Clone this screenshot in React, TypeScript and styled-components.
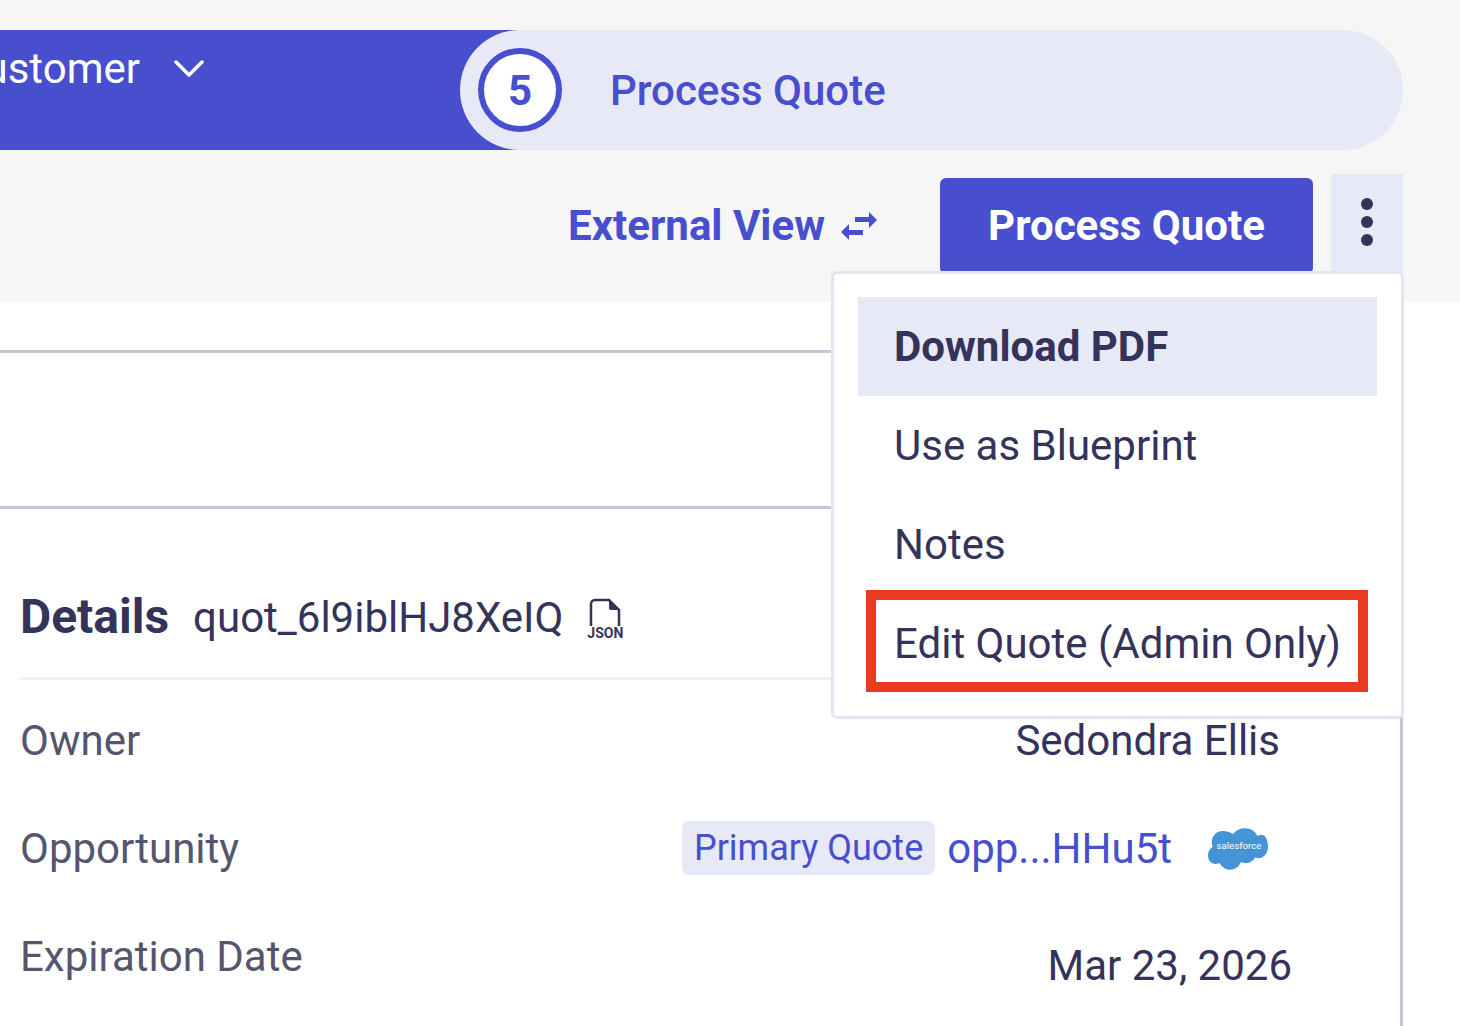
import React from "react";
import styled, { createGlobalStyle } from "styled-components";

const GlobalStyle = createGlobalStyle`
  html, body {
    margin: 0;
    padding: 0;
    background: #ffffff;
    overflow: hidden;
  }
  body {
    font-family: Roboto, "Liberation Sans", sans-serif;
    color: #34335a;
  }
`;

const Page = styled.div`
  position: relative;
  width: 1460px;
  height: 1026px;
  overflow: hidden;
`;

const Header = styled.header`
  height: 302px;
  box-sizing: border-box;
  padding: 30px 57px 0 0;
  background: #f6f6f6;
`;

const Stepper = styled.div`
  display: flex;
  height: 120px;
`;

const ActiveStep = styled.div`
  display: flex;
  justify-content: flex-end;
  flex: 0 0 520px;
  margin-right: -60px;
  padding: 13px 380px 0 0;
  box-sizing: border-box;
  background: #484fce;
  color: #ffffff;
  font-size: 42px;
  line-height: 52px;
  white-space: nowrap;
  overflow: hidden;
`;

const Chevron = styled.svg`
  flex: none;
  width: 30px;
  height: 20px;
  margin: 16px -64px 0 34px;
`;

const CurrentStep = styled.div`
  display: flex;
  align-items: center;
  flex: 1;
  padding-left: 18px;
  border-radius: 60px;
  background: #e7e9f6;
  color: #484fce;
  font-size: 42px;
  font-weight: 500;
`;

const StepNumber = styled.div`
  display: flex;
  align-items: center;
  justify-content: center;
  width: 84px;
  height: 84px;
  margin-right: 48px;
  box-sizing: border-box;
  border: 6px solid #484fce;
  border-radius: 50%;
  background: #ffffff;
  font-size: 42px;
  font-weight: 700;
`;

const Actions = styled.div`
  display: flex;
  align-items: flex-start;
  justify-content: flex-end;
  margin-top: 24px;
`;

const ExternalLink = styled.a`
  display: flex;
  align-items: center;
  height: 103px;
  margin-right: 62px;
  color: #484fce;
  font-size: 42px;
  font-weight: 700;
`;

const SwapIcon = styled.svg`
  width: 38px;
  height: 32px;
  margin-left: 15px;
`;

const PrimaryButton = styled.button`
  width: 373px;
  height: 96px;
  margin: 4px 18px 0 0;
  padding: 0 0 2px;
  border: 0;
  border-radius: 6px;
  background: #484fce;
  color: #ffffff;
  font-family: inherit;
  font-size: 42px;
  font-weight: 700;
`;

const MoreButton = styled.button`
  display: flex;
  flex-direction: column;
  align-items: center;
  gap: 6px;
  width: 72px;
  height: 98px;
  padding: 24px 0 0;
  box-sizing: border-box;
  border: 0;
  background: #e7e9f6;
`;

const Dot = styled.span`
  width: 12px;
  height: 12px;
  border-radius: 50%;
  background: #34335a;
`;

const Dropdown = styled.div`
  position: absolute;
  top: 271px;
  left: 831px;
  z-index: 2;
  width: 573px;
  height: 448px;
  box-sizing: border-box;
  padding: 23px 24px;
  border: 3px solid #e3e5f1;
  border-radius: 6px;
  background: #ffffff;
`;

const MenuItem = styled.div<{ $active?: boolean }>`
  position: relative;
  display: flex;
  align-items: center;
  height: 99px;
  padding-left: 36px;
  background: ${(p) => (p.$active ? "#e7e9f6" : "transparent")};
  color: #34335a;
  font-size: 42px;
  font-weight: ${(p) => (p.$active ? 700 : 400)};
`;

const Highlight = styled.span`
  position: absolute;
  top: -4px;
  left: 8px;
  width: 502px;
  height: 102px;
  box-sizing: border-box;
  border: 10px solid #e93b1e;
`;

const Panel = styled.section`
  height: 724px;
  margin: 48px 57px 0 0;
  box-sizing: border-box;
  border-top: 3px solid #c6c4d9;
  border-right: 3px solid #c6c4d9;
`;

const EmptyRow = styled.div`
  height: 153px;
  border-bottom: 3px solid #c6c4d9;
`;

const Details = styled.div`
  padding: 0 0 0 20px;
`;

const DetailsHeader = styled.div`
  display: flex;
  align-items: center;
  height: 171px;
  padding-top: 47px;
  box-sizing: border-box;
  border-bottom: 3px solid #f1f1f5;
`;

const DetailsTitle = styled.h2`
  margin: 0 24px 0 0;
  color: #34335a;
  font-size: 48px;
  font-weight: 700;
`;

const QuoteId = styled.span`
  margin-top: 2px;
  color: #34335a;
  font-size: 42px;
`;

const JsonBadge = styled.span`
  display: flex;
  flex-direction: column;
  align-items: center;
  margin: 4px 0 0 24px;
  color: #34335a;
  font-size: 14px;
  font-weight: 700;
  line-height: 13px;
`;

const FileIcon = styled.svg`
  width: 34px;
  height: 29px;
`;

const Row = styled.div<{ $height: number }>`
  display: flex;
  align-items: center;
  justify-content: space-between;
  height: ${(p) => p.$height}px;
`;

const Label = styled.span`
  color: #55556d;
  font-size: 42px;
`;

const Value = styled.span<{ $right: number; $drop?: number }>`
  display: flex;
  align-items: center;
  margin-right: ${(p) => p.$right}px;
  margin-top: ${(p) => p.$drop ?? 0}px;
  color: #34335a;
  font-size: 42px;
`;

const Tag = styled.span`
  display: flex;
  align-items: center;
  height: 54px;
  margin: 0 12px 0 0;
  padding: 0 12px;
  border-radius: 8px;
  background: #e7e9f6;
  color: #484fce;
  font-size: 36px;
`;

const OppLink = styled.a`
  color: #484fce;
`;

const SalesforceLogo = styled.svg`
  width: 60px;
  height: 43px;
  margin-left: 36px;
`;

export default function App() {
  return (
    <Page>
      <GlobalStyle />
      <Header>
        <Stepper>
          <ActiveStep>
            Customer
            <Chevron viewBox="0 0 30 20" fill="none">
              <path d="M2 3l13 13L28 3" stroke="#fff" strokeWidth="3.5" strokeLinecap="round" strokeLinejoin="round" />
            </Chevron>
          </ActiveStep>
          <CurrentStep>
            <StepNumber>5</StepNumber>
            Process Quote
          </CurrentStep>
        </Stepper>
        <Actions>
          <ExternalLink>
            External View
            <SwapIcon viewBox="0 0 38 32" fill="#484fce">
              <path d="M15 7h14V2l8 8-8 8v-6H15z" />
              <path d="M1 22l8-8v6h14v5H9v5z" />
            </SwapIcon>
          </ExternalLink>
          <PrimaryButton>Process Quote</PrimaryButton>
          <MoreButton aria-label="More">
            <Dot />
            <Dot />
            <Dot />
          </MoreButton>
        </Actions>
      </Header>

      <Dropdown>
        <MenuItem $active>Download PDF</MenuItem>
        <MenuItem>Use as Blueprint</MenuItem>
        <MenuItem>Notes</MenuItem>
        <MenuItem>
          Edit Quote (Admin Only)
          <Highlight />
        </MenuItem>
      </Dropdown>

      <Panel>
        <EmptyRow />
        <Details>
          <DetailsHeader>
            <DetailsTitle>Details</DetailsTitle>
            <QuoteId>quot_6l9iblHJ8XeIQ</QuoteId>
            <JsonBadge>
              <FileIcon viewBox="0 0 34 29" fill="none">
                <path d="M3 28V6a4 4 0 0 1 4-4h14l10 10v16" stroke="#34335a" strokeWidth="2.5" />
                <path d="M21 2l10 10h-8a2 2 0 0 1-2-2z" fill="#34335a" />
              </FileIcon>
              JSON
            </JsonBadge>
          </DetailsHeader>
          <Row $height={120}>
            <Label>Owner</Label>
            <Value $right={120}>Sedondra Ellis</Value>
          </Row>
          <Row $height={96}>
            <Label>Opportunity</Label>
            <Value $right={132}>
              <Tag>Primary Quote</Tag>
              <OppLink>opp...HHu5t</OppLink>
              <SalesforceLogo viewBox="0 0 62 44">
                <path
                  d="M26 7c3-4 7-6 12-6 6 0 11 3 13 8 2-1 3-1 5-1 3 0 6 5 6 12s-4 12-10 12c-1 0-2 0-3-1-2 4-6 6-10 6-2 0-3 0-5-1-2 5-6 8-11 8s-9-3-11-7c-1 0-2 1-4 1-5 0-8-4-8-9 0-4 2-7 5-9-1-1-1-3-1-5C4 9 9 4 15 4c4 0 8 1 11 3z"
                  fill="#4594d8"
                />
                <text x="32" y="23" textAnchor="middle" fill="#fff" fontSize="10" fontFamily="Roboto, sans-serif">
                  salesforce
                </text>
              </SalesforceLogo>
            </Value>
          </Row>
          <Row $height={120}>
            <Label>Expiration Date</Label>
            <Value $right={108} $drop={18}>Mar 23, 2026</Value>
          </Row>
        </Details>
      </Panel>
    </Page>
  );
}
